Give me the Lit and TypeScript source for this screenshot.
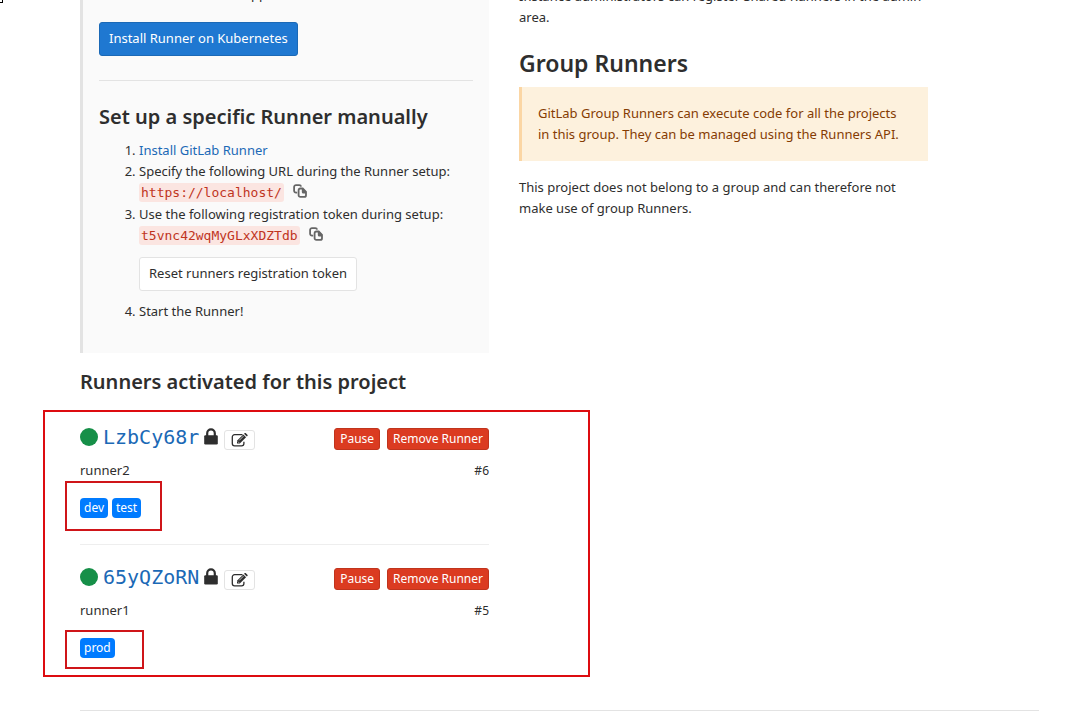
import { LitElement, html, css } from "lit";
import { customElement, property } from "lit/decorators.js";

interface Runner {
  id: number;
  token: string;
  description: string;
  tags: string[];
}

const runners: Runner[] = [
  { id: 6, token: "LzbCy68r", description: "runner2", tags: ["dev", "test"] },
  { id: 5, token: "65yQZoRN", description: "runner1", tags: ["prod"] },
];

const copyIcon = html`<svg viewBox="0 0 14 14" width="14" height="14" aria-hidden="true">
  <path d="M4.200 8.700H3a1.900 1.900 0 0 1-1.900-1.900V3A1.900 1.900 0 0 1 3 1.100h3.200A1.900 1.900 0 0 1 8.100 2.700"
    fill="none" stroke="#666" stroke-width="1.800" />
  <path d="M7.300 4.500h2.400l3.300 3.300v3.400a1.700 1.700 0 0 1-1.700 1.700h-4a1.700 1.700 0 0 1-1.700-1.700v-5a1.700 1.700 0 0 1 1.700-1.700z"
    fill="none" stroke="#666" stroke-width="1.800" />
  <path d="M8.800 4.500h1.500L13 7.300v2.200h-2.700a1.500 1.500 0 0 1-1.500-1.500z" fill="#666" />
</svg>`;

const lockIcon = html`<svg class="lock" viewBox="0 0 14 17" width="14" height="17" role="img" aria-label="Locked">
  <path d="M3.200 8V5.200a3.800 3.800 0 0 1 7.600 0V8" fill="none" stroke="#2e2e2e" stroke-width="2.200" />
  <rect x="0.200" y="7.200" width="13.600" height="9.300" rx="1.200" fill="#2e2e2e" />
</svg>`;

const editIcon = html`<svg viewBox="0 0 18 14" width="18" height="14" aria-hidden="true">
  <path d="M11.500 1.700H3.600A2.300 2.300 0 0 0 1.300 4v6.600a2.300 2.300 0 0 0 2.300 2.300h7a2.300 2.300 0 0 0 2.300-2.300V8.800"
    fill="none" stroke="#2e2e2e" stroke-width="1.300" />
  <path d="M6 10.500V7.700L12.300 1.400l2.800 2.800-6.300 6.300z" fill="#2e2e2e" />
  <path d="M13 .8l.6-.6a1 1 0 0 1 1.300 0l1.500 1.500a1 1 0 0 1 0 1.300l-.6.6z" fill="#2e2e2e" />
  <path d="M8.200 7.400l4.200-4.200M6.800 8.500l1.300 1.300" stroke="#fff" stroke-width=".7" />
</svg>`;

@customElement("runner-item")
class RunnerItem extends LitElement {
  @property({ attribute: false }) runner!: Runner;

  static styles = css`
    :host {
      display: block;
      padding: 23px 0 26px;
      border-bottom: 1px solid #eee;
    }
    :host([last]) { border-bottom-color: transparent; }
    .head, .title, .actions, .meta { display: flex; align-items: center; }
    .head, .meta { justify-content: space-between; }
    .head, .title { height: 22px; }
    .dot { width: 18px; height: 18px; border-radius: 50%; background: #168f48; }
    .name {
      font: 20px/24px "DejaVu Sans Mono", monospace;
      color: #1b69b6;
      text-decoration: none;
      margin: 0 5px;
    }
    .edit {
      display: flex;
      align-items: center;
      justify-content: center;
      box-sizing: border-box;
      width: 31px;
      height: 20px;
      margin: 2px 0 0 6px;
      padding: 0;
      background: #fff;
      border: 1px solid #e3e3e3;
      border-radius: 3px;
    }
    .title .dot, .title .name { margin-bottom: 4px; }
    .title .lock { margin-bottom: 6px; }
    .actions { gap: 7px; }
    .danger {
      font: inherit;
      font-size: 12px;
      line-height: 20px;
      padding: 0 5px;
      color: #fff;
      background: #db3b21;
      border: 1px solid #c0341d;
      border-radius: 3px;
    }
    .meta { margin-top: 10px; line-height: 21px; }
    .number { font-size: 12px; }
    .tags {
      position: relative;
      display: inline-flex;
      gap: 4px;
      margin-top: 17px;
      vertical-align: top;
    }
    .tag {
      font-size: 12px;
      line-height: 20px;
      padding: 0 4px;
      color: #fff;
      background: #007bff;
      border-radius: 4px;
    }
    .frame { position: absolute; border: 2px solid #cf1519; inset: -8px -29px -11px -15px; }
    .frame.wide { inset: -17px -21px -13px -15px; }
  `;

  render() {
    const r = this.runner;
    return html`
      <div class="head">
        <div class="title">
          <span class="dot"></span>
          <a class="name" href="#">${r.token}</a>
          ${lockIcon}
          <button class="edit" type="button" aria-label="Edit">${editIcon}</button>
        </div>
        <div class="actions">
          <button class="danger" type="button">Pause</button>
          <button class="danger" type="button">Remove Runner</button>
        </div>
      </div>
      <div class="meta"><span>${r.description}</span><span class="number">#${r.id}</span></div>
      <div class="tags">
        ${r.tags.map((t) => html`<span class="tag">${t}</span>`)}
        <span class=${r.tags.length > 1 ? "frame wide" : "frame"}></span>
      </div>
    `;
  }
}

@customElement("app-root")
class AppRoot extends LitElement {
  static styles = css`
    :host {
      display: block;
      position: relative;
      height: 100vh;
      overflow: hidden;
      background: #fff;
      color: #2e2e2e;
      font: 13px/21px "Noto Sans", sans-serif;
    }
    * { box-sizing: border-box; }
    .cursor {
      position: absolute;
      top: 0;
      left: 0;
      width: 3px;
      height: 3px;
      border: solid #000;
      border-width: 0 1px 1px 0;
    }
    main { margin-top: -14px; padding: 0 41px 0 80px; }
    .columns {
      display: grid;
      grid-template-columns: 1fr 1fr;
      gap: 30px;
      padding-right: 111px;
    }
    h3, h4, p, ol { margin: 0; }
    h3 { font-size: 23px; line-height: 28px; font-weight: 600; margin: 21px 0 10px; }
    h4 { font-size: 20px; line-height: 24px; font-weight: 600; }
    a { color: #1b69b6; text-decoration: none; }
    .setup {
      border-left: 3px solid #e3e3e3;
      background: #fafafa;
      padding: 0 16px 31px;
    }
    ol { padding-left: 40px; }
    .automatic { list-style: none; line-height: 17px; }
    .primary {
      display: inline-block;
      margin-top: 19px;
      padding: 0 9px 2px;
      line-height: 30px;
      color: #fff;
      background: #1f78d1;
      border: 1px solid #1b69b6;
      border-radius: 3px;
      vertical-align: top;
    }
    hr { border: 0; border-top: 1px solid #e3e3e3; margin: 24px 0; }
    .manual { margin-top: 11px; }
    code {
      font: 13px/17px "DejaVu Sans Mono", monospace;
      color: #c0341d;
      background: #fbe5e1;
      border-radius: 3px;
      padding: 1px 2px;
    }
    .value { display: flex; align-items: center; height: 22px; padding-bottom: 1px; gap: 9px; }
    .copy { display: flex; padding: 0; border: 0; background: none; margin-bottom: 3px; }
    .reset {
      display: block;
      margin: 10px 0;
      padding: 0 9px 2px;
      font: inherit;
      line-height: 30px;
      color: #2e2e2e;
      background: #fff;
      border: 1px solid #e3e3e3;
      border-radius: 3px;
    }
    .active { margin: 17px 0 11px; }
    .list { position: relative; }
    .frame { position: absolute; border: 2px solid #dd0c10; inset: 5px -101px 8px -37px; }
    .callout {
      padding: 16px 26px 16px 16px;
      color: #853c03;
      background: #fdf1dd;
      border-left: 3px solid #fbd6a4;
      margin-bottom: 16px;
    }
    .end { margin: 25px 0 0; }
  `;

  render() {
    return html`
      <span class="cursor"></span>
      <main>
        <div class="columns">
          <section>
            <div class="setup">
              <ol class="automatic"><li>Runner from the applications list</li></ol>
              <a class="primary" href="#">Install Runner on Kubernetes</a>
              <hr />
              <h4>Set up a specific Runner manually</h4>
              <ol class="manual">
                <li><a href="#">Install GitLab Runner</a></li>
                <li>
                  Specify the following URL during the Runner setup:
                  <div class="value">
                    <code>https://localhost/</code>
                    <button class="copy" type="button" aria-label="Copy URL">${copyIcon}</button>
                  </div>
                </li>
                <li>
                  Use the following registration token during setup:
                  <div class="value">
                    <code>t5vnc42wqMyGLxXDZTdb</code>
                    <button class="copy" type="button" aria-label="Copy token">${copyIcon}</button>
                  </div>
                  <button class="reset" type="button">Reset runners registration token</button>
                </li>
                <li>Start the Runner!</li>
              </ol>
            </div>
            <h4 class="active">Runners activated for this project</h4>
            <div class="list">
              ${runners.map(
                (r, i) => html`<runner-item .runner=${r} ?last=${i === runners.length - 1}></runner-item>`,
              )}
              <span class="frame"></span>
            </div>
          </section>
          <section>
            <p>Instance administrators can register Shared Runners in the admin area.</p>
            <h3>Group Runners</h3>
            <div class="callout">
              GitLab Group Runners can execute code for all the projects in this group. They can be
              managed using the Runners API.
            </div>
            <p>This project does not belong to a group and can therefore not make use of group Runners.</p>
          </section>
        </div>
        <hr class="end" />
      </main>
    `;
  }
}
